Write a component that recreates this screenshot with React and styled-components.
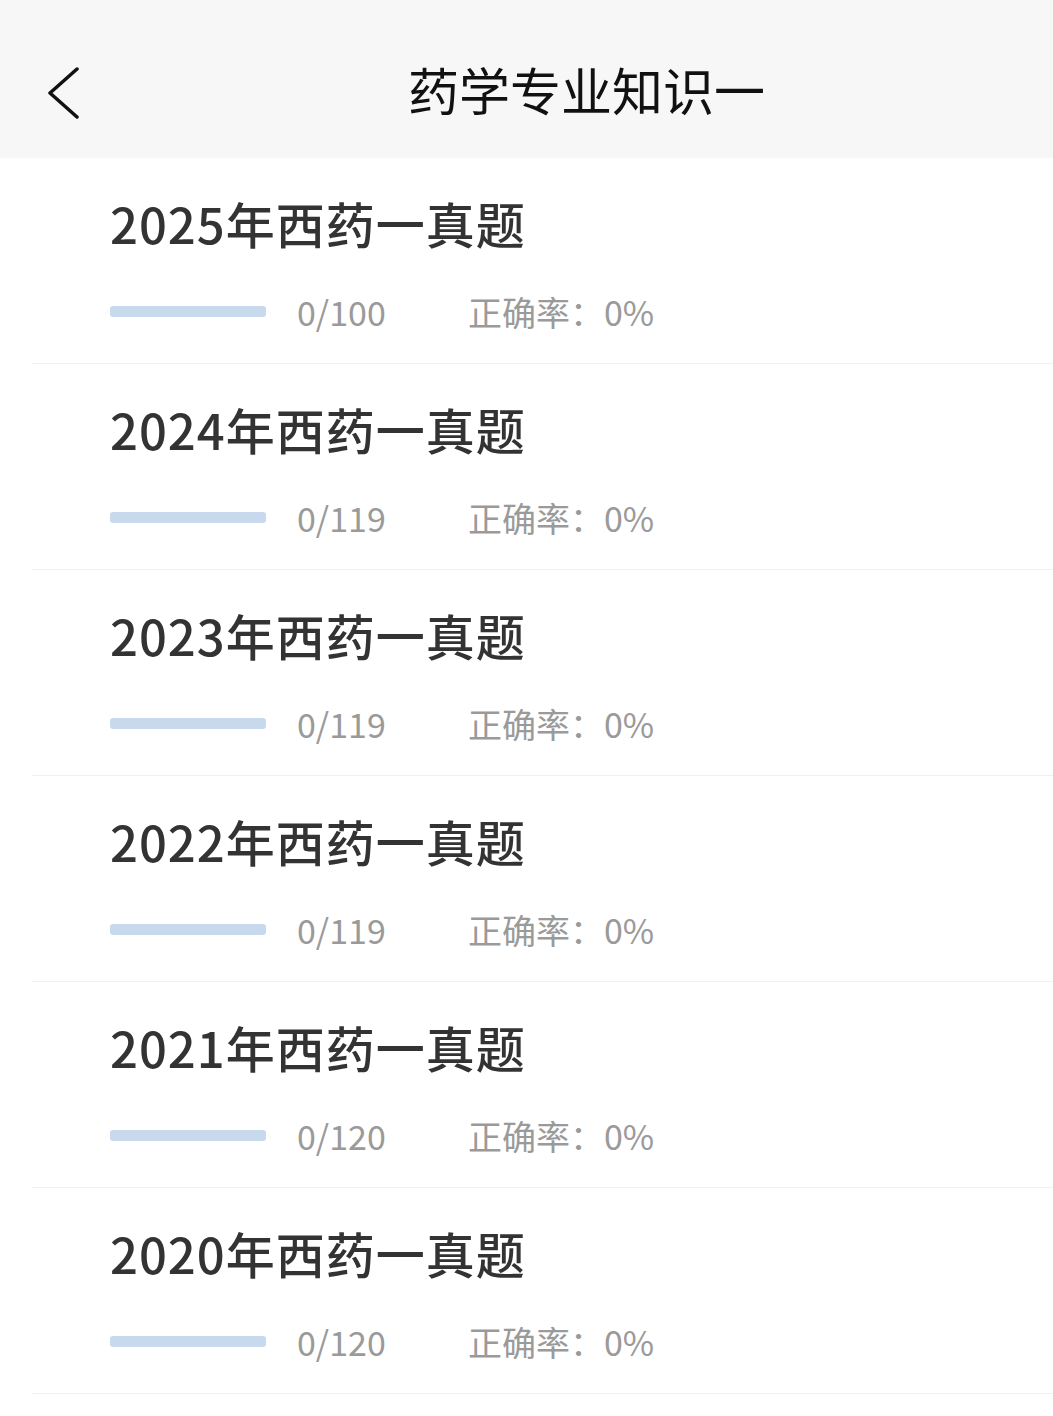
import React from 'react'
import styled, { createGlobalStyle } from 'styled-components'

const GlobalStyle = createGlobalStyle`
  html, body {
    margin: 0;
    padding: 0;
    background: #fff;
    font-family: "Noto Sans CJK SC", "Noto Sans", sans-serif;
    -webkit-font-smoothing: antialiased;
  }
`

const Page = styled.div`
  width: 1053px;
  min-height: 1416px;
  background: #fff;
`

const Header = styled.header`
  box-sizing: border-box;
  height: 158px;
  padding-top: 28px;
  background: #f7f7f7;
  display: flex;
  align-items: center;
`

const BackButton = styled.button`
  border: 0;
  background: transparent;
  padding: 0;
  margin-left: 46px;
  width: 34px;
  height: 52px;
  display: flex;
  align-items: center;
  justify-content: center;
  cursor: pointer;
`

const Title = styled.h1`
  margin: 0 0 8px 328px;
  font-size: 51px;
  font-weight: 400;
  color: #111;
  line-height: 1;
  white-space: nowrap;
`

const List = styled.div`
  display: flex;
  flex-direction: column;
`

const Row = styled.div`
  margin-left: 32px;
  padding: 41px 0 32px 78px;
  border-bottom: 1px solid #f0f0f0;
  display: flex;
  flex-direction: column;
`

const RowTitle = styled.div`
  font-size: 49px;
  line-height: 48px;
  height: 48px;
  letter-spacing: 1px;
  color: #333;
  font-weight: 500;
  white-space: nowrap;
`

const Meta = styled.div`
  margin-top: 44px;
  height: 40px;
  display: flex;
  align-items: center;
  font-size: 34px;
  color: #9a9a9a;
`

const Bar = styled.div`
  width: 156px;
  height: 11px;
  border-radius: 3px;
  background: #c8d9ee;
  margin-right: 31px;
`

const Count = styled.span`
  width: 171px;
`

const Rate = styled.span`
  white-space: nowrap;
`

const items = [
  { year: 2025, total: 100 },
  { year: 2024, total: 119 },
  { year: 2023, total: 119 },
  { year: 2022, total: 119 },
  { year: 2021, total: 120 },
  { year: 2020, total: 120 },
]

export default function App() {
  return (
    <Page>
      <GlobalStyle />
      <Header>
        <BackButton aria-label='返回'>
          <svg width='34' height='52' viewBox='0 0 34 52' fill='none'>
            <polyline
              points='31,2 4,26 31,50'
              stroke='#111'
              strokeWidth='3.5'
              strokeLinecap='round'
              strokeLinejoin='round'
            />
          </svg>
        </BackButton>
        <Title>药学专业知识一</Title>
      </Header>
      <List>
        {items.map(item => (
          <Row key={item.year}>
            <RowTitle>{item.year}年西药一真题</RowTitle>
            <Meta>
              <Bar />
              <Count>0/{item.total}</Count>
              <Rate>正确率：0%</Rate>
            </Meta>
          </Row>
        ))}
      </List>
    </Page>
  )
}
